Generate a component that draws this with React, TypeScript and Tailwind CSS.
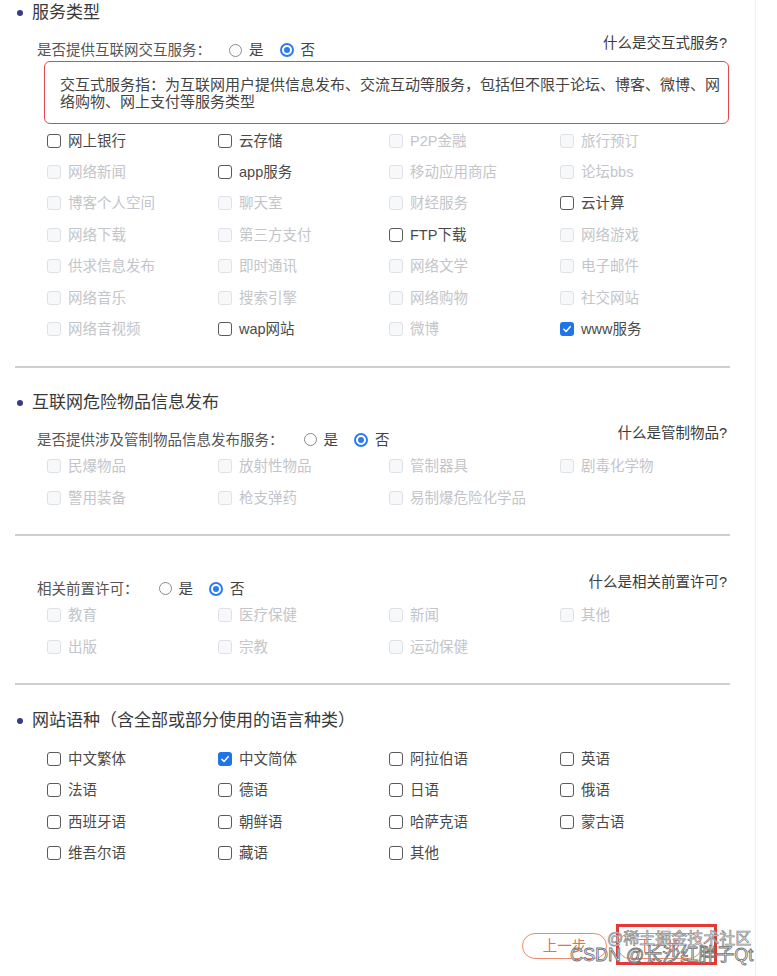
import React from 'react'

type State = 'on' | 'off' | 'checked'
type Item = [string, State]

const serviceItems: Item[] = [
  ['网上银行', 'on'], ['云存储', 'on'], ['P2P金融', 'off'], ['旅行预订', 'off'],
  ['网络新闻', 'off'], ['app服务', 'on'], ['移动应用商店', 'off'], ['论坛bbs', 'off'],
  ['博客个人空间', 'off'], ['聊天室', 'off'], ['财经服务', 'off'], ['云计算', 'on'],
  ['网络下载', 'off'], ['第三方支付', 'off'], ['FTP下载', 'on'], ['网络游戏', 'off'],
  ['供求信息发布', 'off'], ['即时通讯', 'off'], ['网络文学', 'off'], ['电子邮件', 'off'],
  ['网络音乐', 'off'], ['搜索引擎', 'off'], ['网络购物', 'off'], ['社交网站', 'off'],
  ['网络音视频', 'off'], ['wap网站', 'on'], ['微博', 'off'], ['www服务', 'checked'],
]

const dangerItems: Item[] = [
  ['民爆物品', 'off'], ['放射性物品', 'off'], ['管制器具', 'off'], ['剧毒化学物', 'off'],
  ['警用装备', 'off'], ['枪支弹药', 'off'], ['易制爆危险化学品', 'off'],
]

const permitItems: Item[] = [
  ['教育', 'off'], ['医疗保健', 'off'], ['新闻', 'off'], ['其他', 'off'],
  ['出版', 'off'], ['宗教', 'off'], ['运动保健', 'off'],
]

const langItems: Item[] = [
  ['中文繁体', 'on'], ['中文简体', 'checked'], ['阿拉伯语', 'on'], ['英语', 'on'],
  ['法语', 'on'], ['德语', 'on'], ['日语', 'on'], ['俄语', 'on'],
  ['西班牙语', 'on'], ['朝鲜语', 'on'], ['哈萨克语', 'on'], ['蒙古语', 'on'],
  ['维吾尔语', 'on'], ['藏语', 'on'], ['其他', 'on'],
]

function Checkbox({ label, state }: { label: string; state: State }) {
  return (
    <div className="flex items-center h-[31.4px]">
      {state === 'checked' ? (
        <span className="w-[14px] h-[14px] rounded-[3px] bg-[#1f74e8] flex items-center justify-center">
          <svg viewBox="0 0 12 12" className="w-[10px] h-[10px]">
            <path d="M2.2 6.3 L4.9 8.9 L9.8 3.2" fill="none" stroke="white" strokeWidth="1.8" strokeLinecap="round" strokeLinejoin="round" />
          </svg>
        </span>
      ) : state === 'on' ? (
        <span className="w-[14px] h-[14px] rounded-[3px] border-[1.5px] border-[#5a5a5a] bg-white" />
      ) : (
        <span className="w-[14px] h-[14px] rounded-[3px] border border-[#dfe1e6] bg-[#f7f8fa]" />
      )}
      <span
        className={`ml-[7px] text-[14.5px] leading-[18px] ${
          state === 'off' ? 'text-[#c3c5ca]' : 'text-[#4a4a4a]'
        }`}
      >
        {label}
      </span>
    </div>
  )
}

function Grid({ items }: { items: Item[] }) {
  return (
    <div className="grid grid-cols-[171px_171px_171px_171px] pl-[47px]">
      {items.map(([label, state], i) => (
        <Checkbox key={i} label={label} state={state} />
      ))}
    </div>
  )
}

function Radio({ checked }: { checked?: boolean }) {
  return checked ? (
    <span className="w-[14px] h-[14px] rounded-full border-[2px] border-[#2b7cf3] bg-white flex items-center justify-center">
      <span className="w-[6px] h-[6px] rounded-full bg-[#2b7cf3]" />
    </span>
  ) : (
    <span className="w-[13px] h-[13px] rounded-full border border-[#8a8a8a] bg-white" />
  )
}

function QuestionRow({ label, link, gap }: { label: string; link: string; gap: string }) {
  return (
    <div className="flex justify-between items-start pl-[37px] pr-[28px]">
      <div className="pt-[7px] flex items-center text-[14.5px] leading-[18px] text-[#555]">
        <span>{label}</span>
        <span className={`flex items-center ${gap}`}>
          <Radio />
          <span className="ml-[7px] text-[#444]">是</span>
          <span className="ml-[16px]">
            <Radio checked />
          </span>
          <span className="ml-[7px] text-[#444]">否</span>
        </span>
      </div>
      <span className="text-[14.5px] leading-[18px] text-[#3a3a3a]">{link}</span>
    </div>
  )
}

function Title({ text }: { text: string }) {
  return (
    <div className="flex items-center h-[26px] pl-[17px]">
      <span className="w-[6px] h-[6px] rounded-full bg-[#363b8c]" />
      <span className="ml-[9px] text-[17px] leading-[26px] text-[#3a3a3a]">{text}</span>
    </div>
  )
}

function Divider({ className }: { className: string }) {
  return <div className={`h-[2px] bg-[#cfcfcf] ml-[15px] mr-[25px] ${className}`} />
}

export default function App() {
  return (
    <div className="relative w-[777px] h-[976px] bg-white overflow-hidden font-['Liberation_Sans','Noto_Sans_CJK_SC',sans-serif]">
      <div className="w-[756px] h-full border-r border-[#eff1f4] flex flex-col">
        {/* 服务类型 */}
        <Title text="服务类型" />
        <div className="mt-[8px]">
          <QuestionRow label="是否提供互联网交互服务：" link="什么是交互式服务?" gap="ml-[18px]" />
        </div>
        <div className="mt-[2px] ml-[44px] mr-[26px] h-[63px] border border-[#e2474e] rounded-[6px] pl-[15px] pr-[6px] pt-[14px] text-[15px] leading-[17px] text-[#444]">
          交互式服务指：为互联网用户提供信息发布、交流互动等服务，包括但不限于论坛、博客、微博、网络购物、网上支付等服务类型
        </div>
        <div className="mt-[1px]">
          <Grid items={serviceItems} />
        </div>
        <Divider className="mt-[21px]" />

        {/* 互联网危险物品信息发布 */}
        <div className="mt-[22px]">
          <Title text="互联网危险物品信息发布" />
        </div>
        <div className="mt-[8px]">
          <QuestionRow label="是否提供涉及管制物品信息发布服务：" link="什么是管制物品?" gap="ml-[20px]" />
        </div>
        <div className="mt-[2px]">
          <Grid items={dangerItems} />
        </div>
        <Divider className="mt-[20px]" />

        {/* 相关前置许可 */}
        <div className="mt-[37px]">
          <QuestionRow label="相关前置许可：" link="什么是相关前置许可?" gap="ml-[20px]" />
        </div>
        <div className="mt-[2px]">
          <Grid items={permitItems} />
        </div>
        <Divider className="mt-[21px]" />

        {/* 网站语种 */}
        <div className="mt-[23px]">
          <Title text="网站语种（含全部或部分使用的语言种类）" />
        </div>
        <div className="mt-[9px]">
          <Grid items={langItems} />
        </div>

        {/* buttons */}
        <div className="mt-[64px] flex justify-end pr-[53px] gap-[10px]">
          <button className="w-[85px] h-[26px] rounded-full border border-[#ec8a6d] text-[#e8704a] text-[14.5px] leading-[18px]">
            上一步
          </button>
          <div className="relative">
            <button className="w-[85px] h-[26px] rounded-full border border-[#ec8a6d] text-[#e8704a] text-[14.5px] leading-[18px]">
              下一步
            </button>
            <div className="absolute left-[-1px] top-[-9px] w-[101px] h-[41px] border-[3px] border-[#e53935]" />
          </div>
        </div>
      </div>

      {/* watermark */}
      <div className="absolute left-[607px] top-[929px] text-[16px] leading-[20px] text-[#f4f4f4] [-webkit-text-stroke:0.7px_#8a8a8a]">
        @稀土掘金技术社区
      </div>
      <div className="absolute left-[570px] top-[944px] text-[18px] leading-[22px] text-[#f7f7f7] [-webkit-text-stroke:0.8px_#6f6f6f]">
        CSDN @长沙红胖子Qt
      </div>
    </div>
  )
}
